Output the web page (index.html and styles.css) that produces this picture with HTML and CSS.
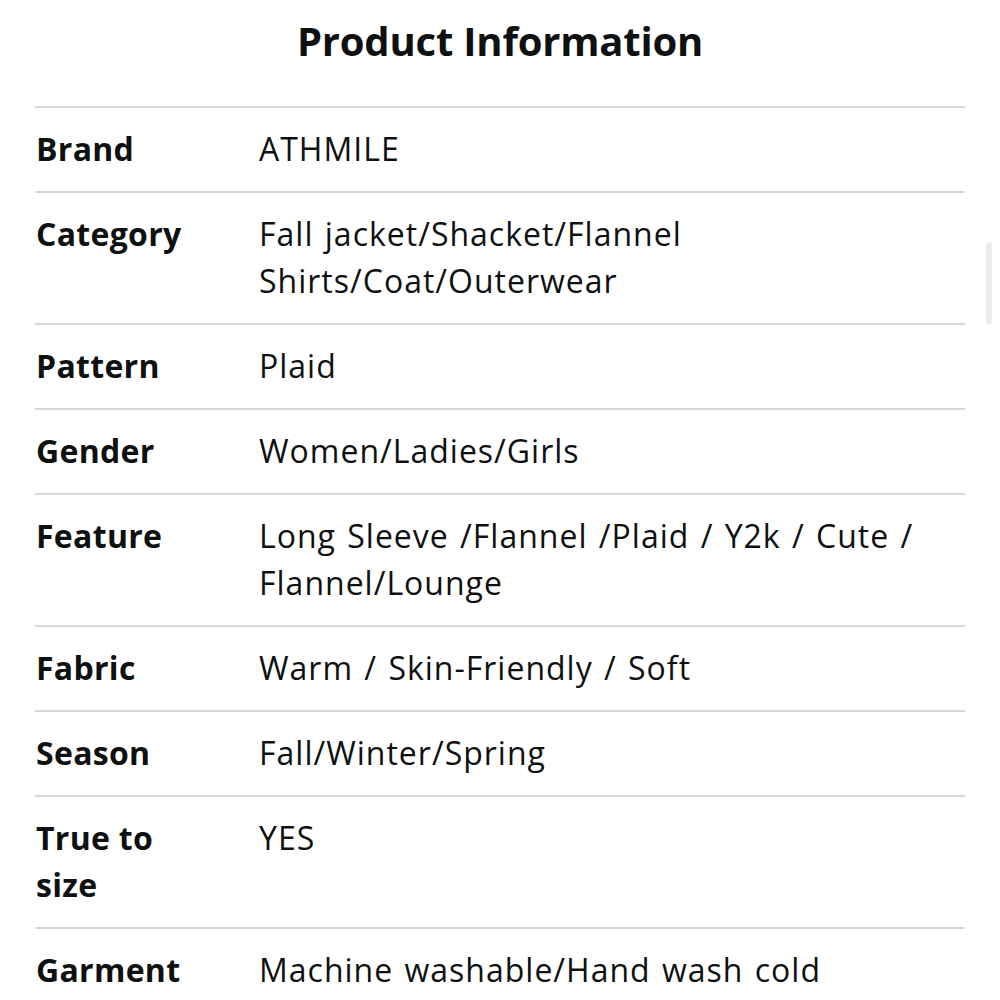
FILE: index.html
```html
<!DOCTYPE html>
<html lang="en">
<head>
<meta charset="utf-8">
<title>Product Information</title>
<link rel="stylesheet" href="styles.css">
</head>
<body>
<main class="page">
  <h1 class="title">Product Information</h1>
  <div class="table">
    <div class="row"><div class="label">Brand</div><div class="value">ATHMILE</div></div>
    <div class="row"><div class="label">Category</div><div class="value">Fall jacket/Shacket/Flannel Shirts/Coat/Outerwear</div></div>
    <div class="row"><div class="label">Pattern</div><div class="value">Plaid</div></div>
    <div class="row"><div class="label">Gender</div><div class="value">Women/Ladies/Girls</div></div>
    <div class="row"><div class="label">Feature</div><div class="value">Long Sleeve /Flannel /Plaid / Y2k / Cute / Flannel/Lounge</div></div>
    <div class="row"><div class="label">Fabric</div><div class="value">Warm / Skin-Friendly / Soft</div></div>
    <div class="row"><div class="label">Season</div><div class="value">Fall/Winter/Spring</div></div>
    <div class="row"><div class="label">True to size</div><div class="value">YES</div></div>
    <div class="row"><div class="label">Garment</div><div class="value">Machine washable/Hand wash cold</div></div>
  </div>
</main>
<div class="scrollbar"></div>
</body>
</html>
```

FILE: styles.css
```css
html, body {
  margin: 0;
  padding: 0;
  background: #ffffff;
  overflow: hidden;
}
body {
  font-family: "Open Sans", "Noto Sans", sans-serif;
  color: #0f1111;
}
.page {
  padding: 17px 35px 0 35px;
}
.title {
  margin: 0 0 41px 0;
  font-size: 40px;
  line-height: 48px;
  font-weight: 700;
  text-align: center;
  letter-spacing: -0.2px;
}
.table {
  border-top: 2px solid #d5d9d9;
}
.row {
  display: grid;
  grid-template-columns: 224px 1fr;
  padding: 17px 0 19px 0;
  border-bottom: 2px solid #d5d9d9;
  font-size: 32px;
  line-height: 47px;
}
.label {
  font-weight: 700;
  padding-left: 1px;
  max-width: 175px;
  letter-spacing: 0.3px;
}
.value {
  font-weight: 400;
  padding-right: 20px;
  letter-spacing: 1px;
  word-spacing: 2px;
}
.scrollbar {
  position: absolute;
  left: 986px;
  top: 242px;
  width: 6px;
  height: 83px;
  border-radius: 3px;
  background: #ececec;
}
```
